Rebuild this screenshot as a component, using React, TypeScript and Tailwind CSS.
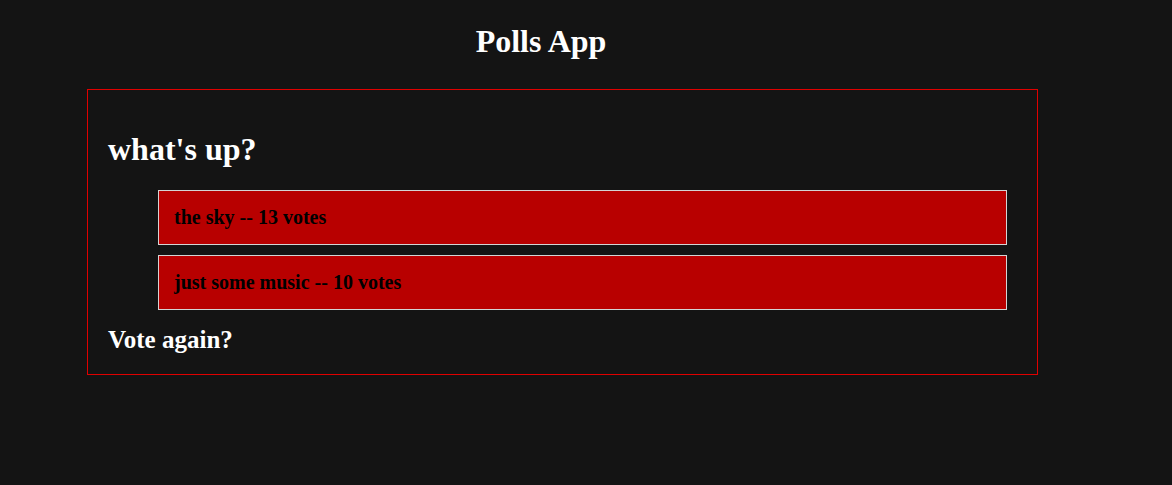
const options = [
  { label: 'the sky', votes: 13 },
  { label: 'just some music', votes: 10 },
];

export default function App() {
  return (
    <div className="min-h-screen bg-[#141414] text-white font-['Liberation_Serif',serif] pt-[23px]">
      <h1 className="w-[1082px] text-center text-[32px] font-bold leading-[normal]">Polls App</h1>
      <div className="ml-[87px] mt-[29px] w-[951px] border border-[#e00000] pt-[41px] pb-[20px] pl-[20px]">
        <h2 className="text-[32px] font-bold leading-[normal]">what's up?</h2>
        <ul className="ml-[50px] mt-[22px] w-[849px] flex flex-col gap-[10px]">
          {options.map((o) => (
            <li
              key={o.label}
              className="h-[55px] flex items-center border border-[#d4d4d4] bg-[#b80000] pl-[15px] text-black text-[20px] font-bold leading-[normal]"
            >
              {o.label} -- {o.votes} votes
            </li>
          ))}
        </ul>
        <h3 className="mt-[16px] text-[25px] font-bold leading-[normal]">Vote again?</h3>
      </div>
    </div>
  );
}
